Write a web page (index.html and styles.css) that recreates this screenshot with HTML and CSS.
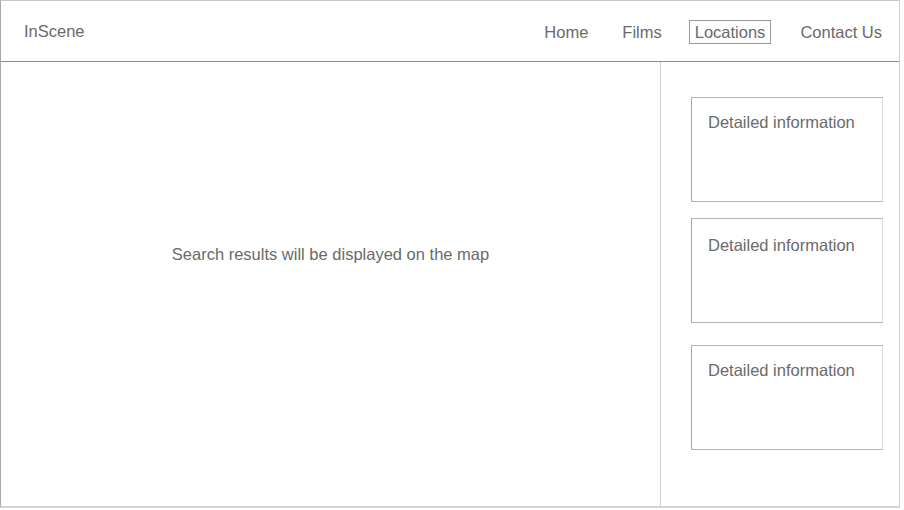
FILE: index.html
```html
<!DOCTYPE html>
<html lang="en">
<head>
<meta charset="utf-8">
<title>InScene</title>
<link rel="stylesheet" href="styles.css">
</head>
<body>
<div class="frame">
  <header class="header">
    <div class="logo">InScene</div>
    <nav class="nav">
      <a class="nav-item">Home</a>
      <a class="nav-item nav-films">Films</a>
      <a class="nav-item active">Locations</a>
      <a class="nav-item">Contact Us</a>
    </nav>
  </header>
  <main class="main">
    <section class="map">
      <p class="map-text">Search results will be displayed on the map</p>
    </section>
    <aside class="side">
      <div class="card">Detailed information</div>
      <div class="card card-second">Detailed information</div>
      <div class="card card-third">Detailed information</div>
    </aside>
  </main>
</div>
</body>
</html>
```

FILE: styles.css
```css
html, body {
  margin: 0;
  padding: 0;
  background: #ffffff;
}
body {
  font-family: "Liberation Sans", Arial, sans-serif;
  color: #666666;
  font-size: 16.5px;
}
.frame {
  width: 898px;
  height: 505px;
  border-left: 1px solid #a8a8a8;
  border-top: 1px solid #c8c8c8;
  border-right: 1px solid #cfcfcf;
  border-bottom: 2px solid #d4d4d4;
  display: flex;
  flex-direction: column;
}
.header {
  height: 59px;
  padding: 1px 11px 0 23px;
  border-bottom: 1px solid #8c8c8c;
  display: flex;
  align-items: center;
  justify-content: space-between;
}
.logo {
  font-size: 16.5px;
  color: #6a6a6a;
}
.nav {
  display: flex;
  align-items: center;
}
.nav-item {
  color: #6a6a6a;
  font-size: 16.5px;
  line-height: 22px;
  margin-left: 23px;
  padding: 0 5px;
  border: 1px solid transparent;
}
.nav-item:first-child {
  margin-left: 0;
}
.nav-films {
  margin-left: 22px;
}
.nav-item.active {
  margin-left: 21px;
  border-color: #9a9a9a;
}
.main {
  flex: 1;
  display: flex;
}
.map {
  width: 659px;
  border-right: 1px solid #d0d0d0;
  display: flex;
  justify-content: center;
  padding-top: 182px;
}
.map-text {
  margin: 0;
  font-size: 16.5px;
  line-height: 20px;
  color: #6a6a6a;
}
.side {
  flex: 1;
  padding: 35px 16px 0 30px;
  display: flex;
  flex-direction: column;
  gap: 16px;
}
.card {
  height: 89px;
  border-top: 1px solid #b4b4b4;
  border-left: 1px solid #a8a8a8;
  border-right: 1px solid #dedede;
  border-bottom: 1px solid #b4b4b4;
  padding: 14px 16px 0 16px;
  font-size: 16.5px;
  line-height: 20px;
  color: #6a6a6a;
}
.card-second {
  height: 87px;
  padding-top: 16px;
}
.card-third {
  margin-top: 6px;
}
```
